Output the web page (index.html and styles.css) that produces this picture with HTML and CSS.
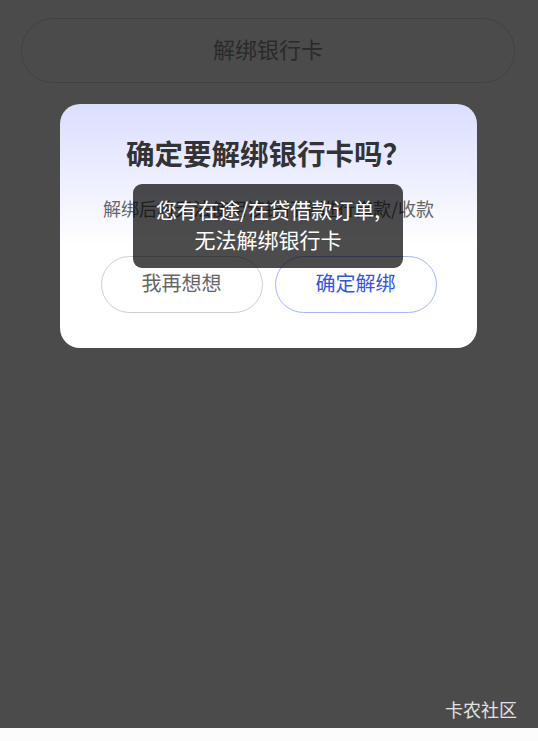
FILE: index.html
```html
<!DOCTYPE html>
<html lang="zh-CN">
<head>
<meta charset="utf-8">
<title>解绑银行卡</title>
<link rel="stylesheet" href="styles.css">
</head>
<body>
<div class="page">
  <div class="unbind-btn">解绑银行卡</div>

  <div class="mask">
    <div class="dialog">
      <h2 class="dialog-title">确定要解绑银行卡吗？</h2>
      <p class="dialog-desc">解绑后将无法使用该银行卡进行借款/收款</p>
      <div class="dialog-actions">
        <div class="btn btn-cancel">我再想想</div>
        <div class="btn btn-confirm">确定解绑</div>
      </div>
    </div>
  </div>

  <div class="toast">您有在途/在贷借款订单,<br>无法解绑银行卡</div>
  <div class="watermark">卡农社区</div>
</div>
</body>
</html>
```

FILE: styles.css
```css
* { box-sizing: border-box; }

html, body {
  margin: 0;
  padding: 0;
}

body {
  background: #fcfcfc;
  font-family: "Noto Sans CJK SC", "Noto Sans", sans-serif;
}

.page {
  position: relative;
  height: 728px;
  background: #ffffff;
  padding: 18px 23px 0 21px;
}

.unbind-btn {
  display: flex;
  align-items: center;
  justify-content: center;
  width: 100%;
  height: 65px;
  border: 1px solid #dcdcdc;
  border-radius: 33px;
  background: #ffffff;
  color: #8f8f8f;
  font-size: 22px;
  line-height: 30px;
  padding-bottom: 6px;
}

.mask {
  position: absolute;
  inset: 0;
  background: rgba(0, 0, 0, 0.706);
  display: flex;
  flex-direction: column;
  align-items: center;
  padding-top: 104px;
}

.dialog {
  width: 417px;
  margin-left: -1px;
  border-radius: 20px;
  background: linear-gradient(180deg, #dbdeff 0%, #f3f4ff 40%, #ffffff 58%, #ffffff 100%);
  padding: 30px 0 35px;
  display: flex;
  flex-direction: column;
  align-items: center;
}

.dialog-title {
  margin: 0;
  font-size: 28.5px;
  line-height: 38px;
  font-weight: 700;
  color: #333333;
}

.dialog-desc {
  margin: 23px 0 0;
  font-size: 18px;
  line-height: 26px;
  color: #666666;
}

.dialog-actions {
  margin-top: 35px;
  display: flex;
  gap: 12px;
}

.btn {
  display: flex;
  align-items: center;
  justify-content: center;
  width: 162px;
  height: 57px;
  border-radius: 29px;
  background: #ffffff;
  font-size: 20px;
  line-height: 28px;
  padding-bottom: 3px;
}

.btn-cancel {
  border: 1px solid #cfcfcf;
  color: #666666;
}

.btn-confirm {
  border: 1px solid #a9b6f7;
  color: #3453e8;
}

.toast {
  position: absolute;
  top: 184px;
  left: 133px;
  width: 270px;
  padding: 10px 10px 14px;
  border-radius: 9px;
  background: rgba(0, 0, 0, 0.7);
  color: #ffffff;
  font-size: 21px;
  line-height: 30px;
  text-align: center;
}

.watermark {
  position: absolute;
  right: 21px;
  bottom: 6px;
  font-size: 18px;
  line-height: 26px;
  color: #e2e2e2;
}
```
